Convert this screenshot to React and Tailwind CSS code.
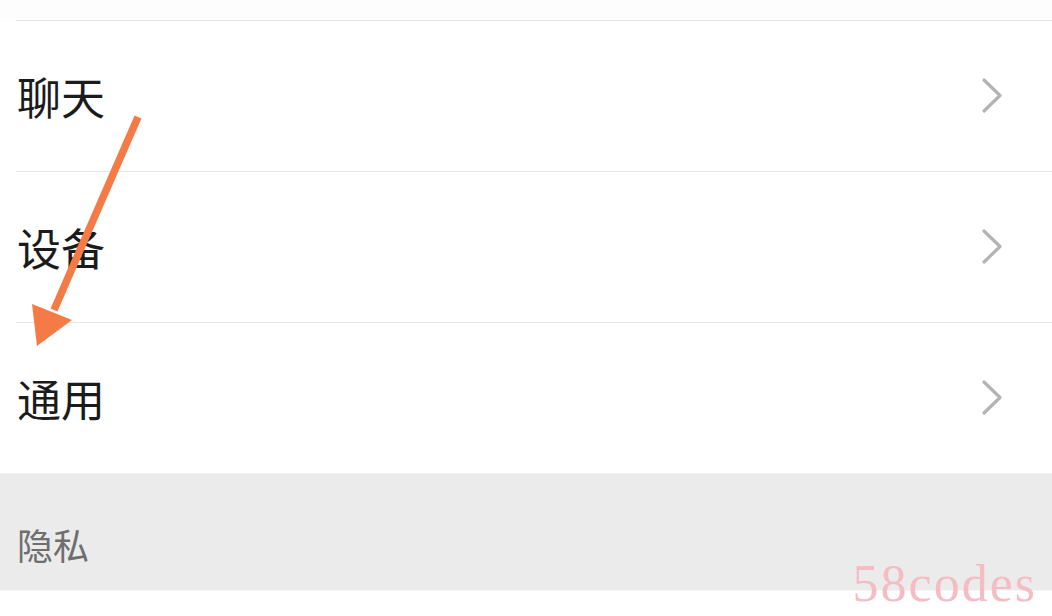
import React from "react";

function Chevron() {
  return (
    <svg width="24" height="38" viewBox="0 0 24 38" className="shrink-0">
      <path d="M3 3 L19 18.5 L3 34" fill="none" stroke="#b3b3b3" strokeWidth="3.2" strokeLinecap="round" strokeLinejoin="round" />
    </svg>
  );
}

function Row({ label }) {
  return (
    <div>
      <div className="ml-4 h-px bg-[#e6e6e6]" />
      <div className="flex h-[150px] items-center justify-between pl-[17px] pr-[47px]">
        <span className="text-[44px] leading-none text-[#1b1b1b]">{label}</span>
        <Chevron />
      </div>
    </div>
  );
}

export default function App() {
  return (
    <div
      className="relative h-[616px] w-[1052px] overflow-hidden bg-white"
      style={{ fontFamily: '"Noto Sans CJK SC", "Noto Sans", sans-serif' }}
    >
      <div className="h-5 bg-[#fdfdfd]" />
      <Row label="聊天" />
      <Row label="设备" />
      <Row label="通用" />
      <div className="flex h-[117px] items-center border-t border-[#f2f2f2] bg-[#ebebeb] pl-[17px]">
        <span className="mt-[24px] text-[36px] leading-none text-[#6e6e6e]">隐私</span>
      </div>
      <div className="h-px bg-[#f5f5f5]" />

      <svg className="pointer-events-none absolute left-0 top-0" width="1052" height="616">
        <line x1="138" y1="117" x2="54" y2="310" stroke="#f47b45" strokeWidth="7.5" strokeLinecap="butt" />
        <polygon points="32,304 72,320 37,346" fill="#f47b45" />
      </svg>

      <div
        className="pointer-events-none absolute bottom-[6px] right-[15px] text-[52px] leading-none tracking-[2px] text-[#f5bcc4]"
        style={{ fontFamily: '"Liberation Serif", serif' }}
      >
        58codes
      </div>
    </div>
  );
}
